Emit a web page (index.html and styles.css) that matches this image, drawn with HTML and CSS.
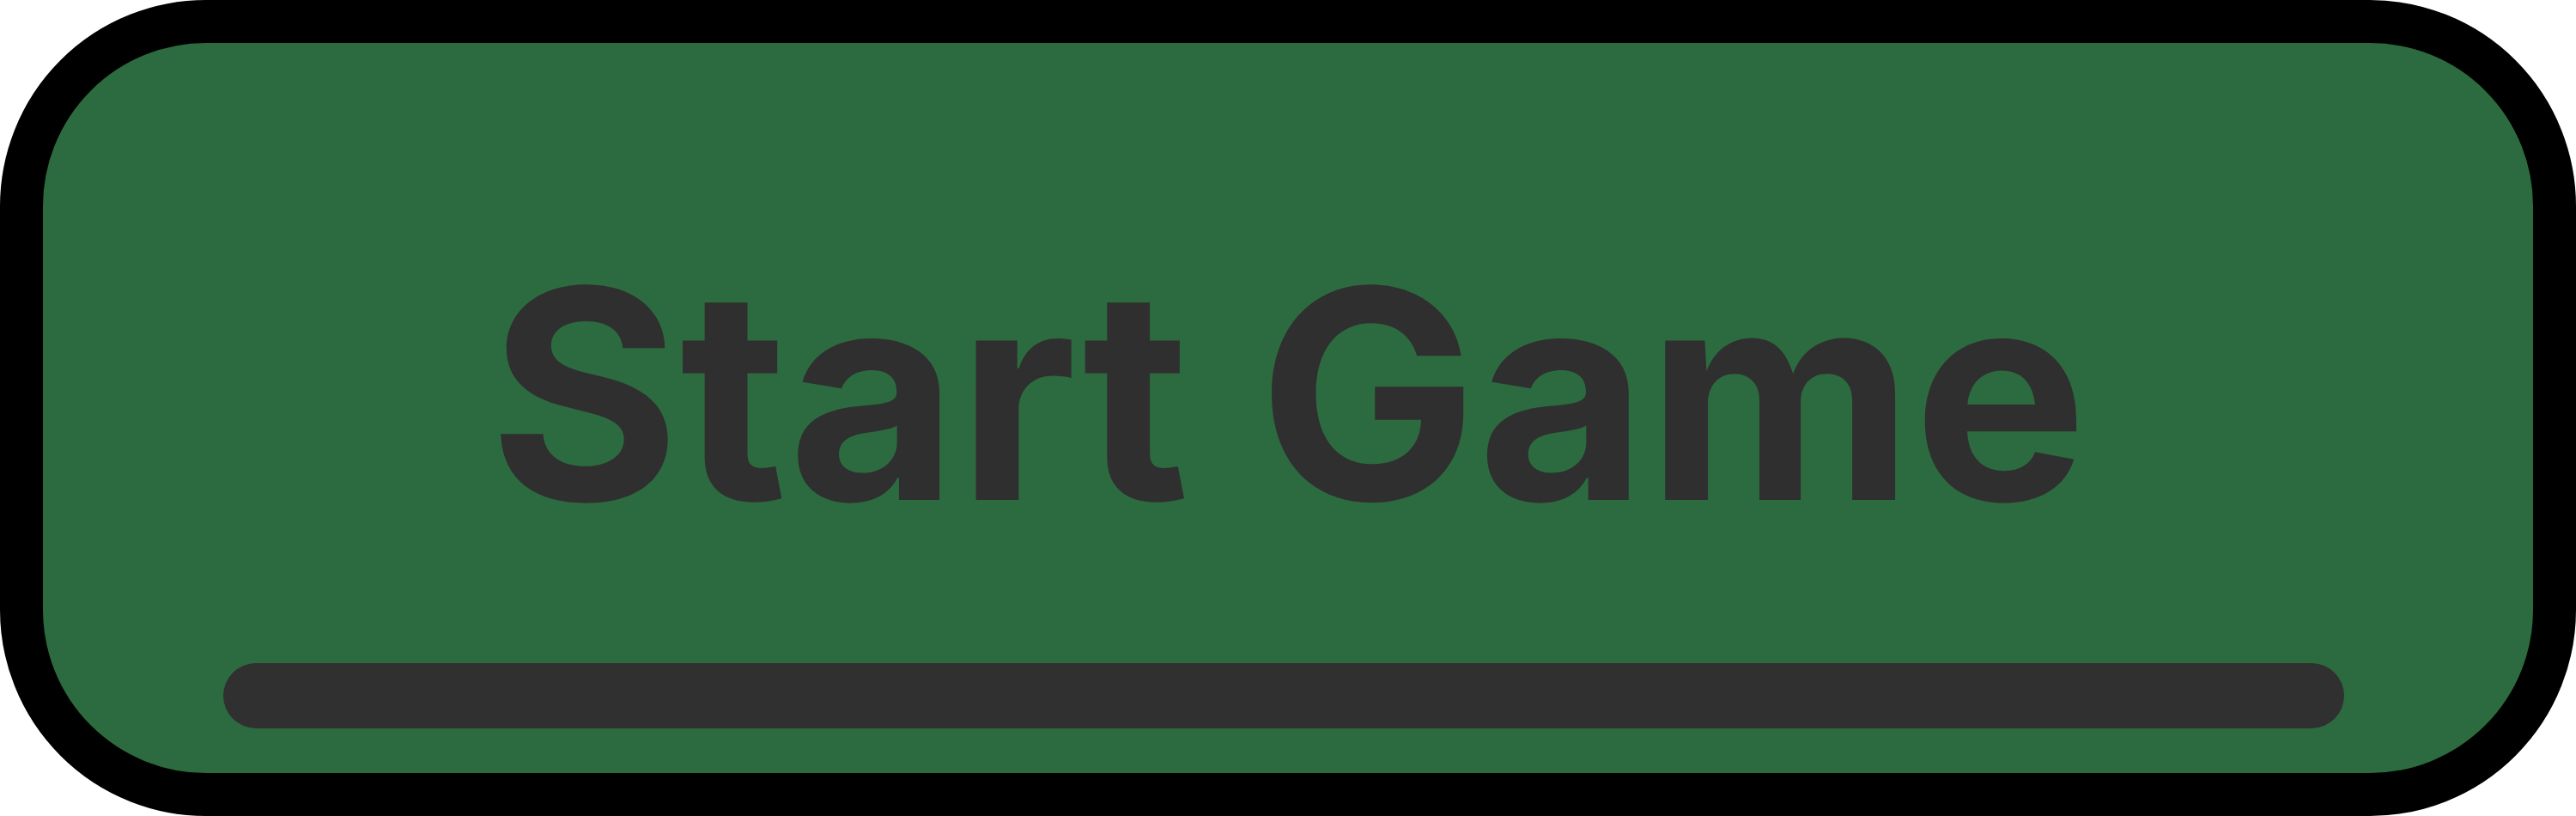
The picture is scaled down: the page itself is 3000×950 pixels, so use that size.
FILE: index.html
```html
<!DOCTYPE html>
<html lang="en">
<head>
<meta charset="utf-8">
<title>Start Game</title>
<link rel="stylesheet" href="styles.css">
</head>
<body>
<div class="button">
  <div class="label">Start Game</div>
  <div class="bar"></div>
</div>
</body>
</html>
```

FILE: styles.css
```css
html, body {
  margin: 0;
  padding: 0;
  background: #ffffff;
}
.button {
  width: 3000px;
  height: 950px;
  box-sizing: border-box;
  border: 50px solid #000000;
  border-radius: 240px;
  background: #2c6b3f;
  display: flex;
  flex-direction: column;
  padding-top: 239px;
}
.label {
  font-family: Inter, "Noto Sans", sans-serif;
  font-weight: 700;
  font-size: 340px;
  line-height: 340px;
  color: #2f2f2f;
  text-align: center;
}
.bar {
  margin-top: 143px;
  margin-left: 210px;
  width: 2470px;
  height: 76px;
  border-radius: 38px;
  background: #303030;
}
```
